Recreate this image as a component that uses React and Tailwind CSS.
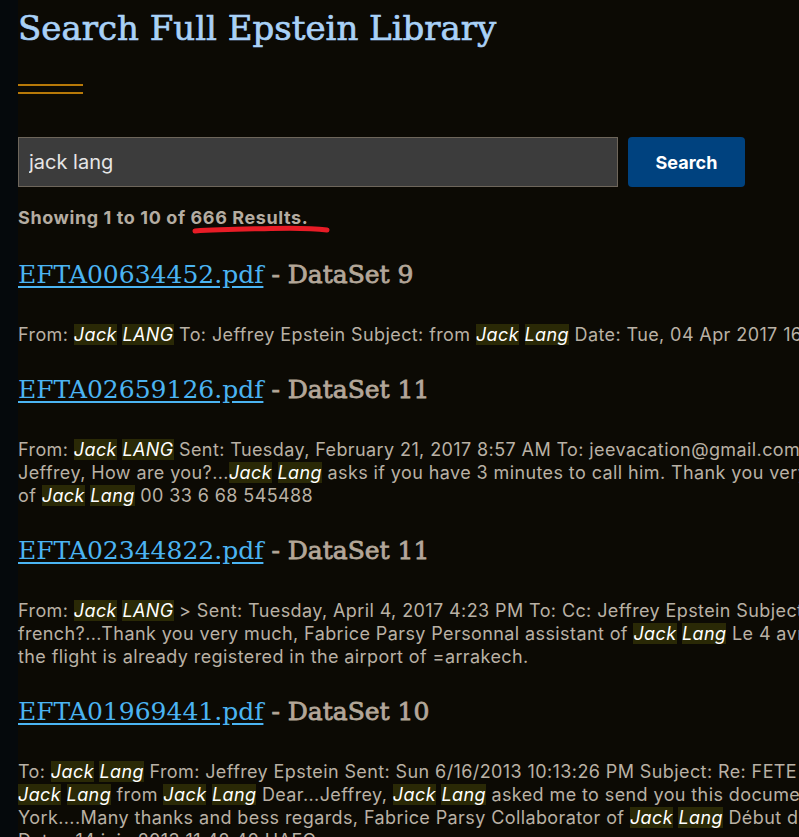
import React from "react";

const sans = { fontFamily: 'Inter, "Liberation Sans", sans-serif' };
const serif = { fontFamily: '"DejaVu Serif", "Liberation Serif", serif' };

// A single highlighted search hit inside a snippet
function Hit({ children }) {
  return <mark className="bg-[#2a2906] text-white italic">{children}</mark>;
}

const results = [
  {
    file: "EFTA00634452.pdf",
    set: "DataSet 9",
    lines: [
      <>From: <Hit>Jack</Hit> <Hit>LANG</Hit> To: Jeffrey Epstein Subject: from <Hit>Jack</Hit> <Hit>Lang</Hit> Date: Tue, 04 Apr 2017 16:12:05 +0200</>,
    ],
  },
  {
    file: "EFTA02659126.pdf",
    set: "DataSet 11",
    lines: [
      <>From: <Hit>Jack</Hit> <Hit>LANG</Hit> Sent: Tuesday, February 21, 2017 8:57 AM To: jeevacation@gmail.com Subject:</>,
      <>Jeffrey, How are you?...<Hit>Jack</Hit> <Hit>Lang</Hit> asks if you have 3 minutes to call him. Thank you very much, Fabrice</>,
      <>of <Hit>Jack</Hit> <Hit>Lang</Hit> 00 33 6 68 545488</>,
    ],
  },
  {
    file: "EFTA02344822.pdf",
    set: "DataSet 11",
    lines: [
      <>From: <Hit>Jack</Hit> <Hit>LANG</Hit> &gt; Sent: Tuesday, April 4, 2017 4:23 PM To: Cc: Jeffrey Epstein Subject: Do you speak</>,
      <>french?...Thank you very much, Fabrice Parsy Personnal assistant of <Hit>Jack</Hit> <Hit>Lang</Hit> Le 4 avr. 2017 à 16:30</>,
      <>the flight is already registered in the airport of =arrakech.</>,
    ],
  },
  {
    file: "EFTA01969441.pdf",
    set: "DataSet 10",
    lines: [
      <>To: <Hit>Jack</Hit> <Hit>Lang</Hit> From: Jeffrey Epstein Sent: Sun 6/16/2013 10:13:26 PM Subject: Re: FETE DE LA MUSIQUE</>,
      <><Hit>Jack</Hit> <Hit>Lang</Hit> from <Hit>Jack</Hit> <Hit>Lang</Hit> Dear...Jeffrey, <Hit>Jack</Hit> <Hit>Lang</Hit> asked me to send you this document for New</>,
      <>York....Many thanks and bess regards, Fabrice Parsy Collaborator of <Hit>Jack</Hit> <Hit>Lang</Hit> Début du message réexpédié :</>,
      <>Date : 14 juin 2013 11:42:40 HAEC</>,
    ],
  },
];

export default function App() {
  return (
    <div className="flex h-[837px] w-[799px] overflow-hidden bg-[#0c0a04]">
      <div className="w-[18px] shrink-0 bg-[#05090c]" />
      <main className="w-[1100px] shrink-0">
        <h1
          style={serif}
          className="mt-[4px] text-[34px] leading-[48px] font-normal text-[#a9d1f7] [-webkit-text-stroke:0.7px_#a9d1f7]"
        >
          Search Full Epstein Library
        </h1>
        <div className="mt-[32px] flex w-[65px] flex-col gap-[6px]">
          <div className="h-[2px] bg-[#b87908]" />
          <div className="h-[2px] bg-[#b87908]" />
        </div>

        <form className="mt-[43px] flex gap-[10px]" onSubmit={(e) => e.preventDefault()}>
          <input
            style={sans}
            defaultValue="jack lang"
            className="h-[50px] w-[600px] border border-[#6e665b] bg-[#3c3c3c] px-[10px] text-[20px] text-[#e6e6e6] outline-none"
          />
          <button
            type="submit"
            style={sans}
            className="h-[50px] w-[117px] rounded-[4px] bg-[#00427f] text-[18px] font-bold text-white"
          >
            Search
          </button>
        </form>

        <div
          style={sans}
          className="relative mt-[19px] text-[18px] leading-[24px] font-bold tracking-[0.6px] text-[#b5ada2]"
        >
          Showing 1 to 10 of 666 Results.
          <svg className="absolute left-[173px] top-[17px]" width="140" height="14" viewBox="0 0 140 14">
            <path
              d="M4 8 C30 6 60 6 80 5.5 C100 5 120 5 136 7"
              stroke="#e81c26"
              strokeWidth="5"
              strokeLinecap="round"
              fill="none"
            />
          </svg>
        </div>

        <div className="mt-[28px] flex flex-col">
          {results.map((r, i) => (
            <section key={r.file} className={i === 0 ? "" : "mt-[27px]"}>
              <h2 style={serif} className="text-[25px] leading-[34px] text-[#b3a799]">
                <a href="#" className="text-[#4bb4f2] underline underline-offset-[3px]">
                  {r.file}
                </a>{" "}
                <span className="[-webkit-text-stroke:0.8px_#b3a799]">- {r.set}</span>
              </h2>
              <div
                style={sans}
                className="mt-[31px] text-[18px] leading-[23px] tracking-[0.4px] text-[#b9b1a5]"
              >
                {r.lines.map((l, j) => (
                  <div key={j} className="whitespace-nowrap">
                    {l}
                  </div>
                ))}
              </div>
            </section>
          ))}
        </div>
      </main>
    </div>
  );
}
